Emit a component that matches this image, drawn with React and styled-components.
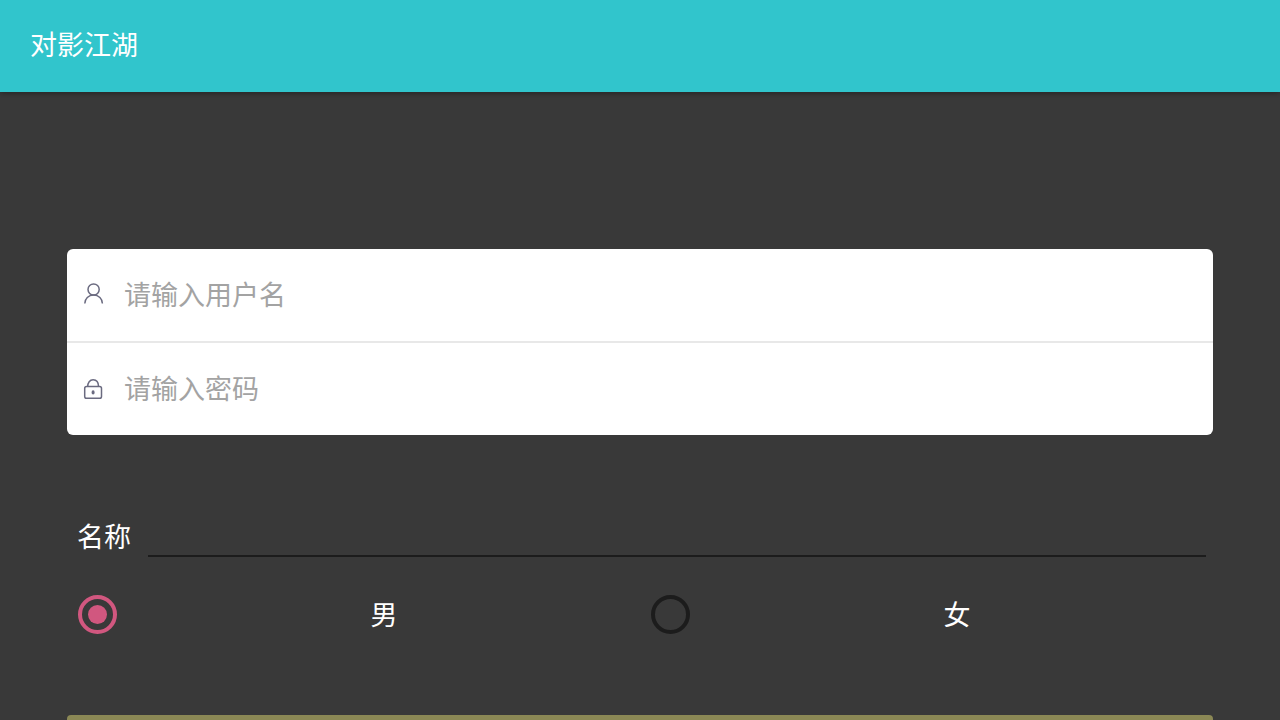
import React, { useState } from "react";
import styled, { createGlobalStyle } from "styled-components";

function App() {
  const [gender, setGender] = useState("male");

  return (
    <Screen>
      <GlobalStyle />
      <Header>
        <Title>对影江湖</Title>
      </Header>
      <Form onSubmit={(e) => e.preventDefault()}>
        <Card>
          <Field>
            <UserIcon />
            <FieldInput type="text" placeholder="请输入用户名" aria-label="用户名" />
          </Field>
          <Field>
            <LockIcon />
            <FieldInput type="password" placeholder="请输入密码" aria-label="密码" />
          </Field>
        </Card>

        <NameRow>
          <label htmlFor="name">名称</label>
          <NameInput id="name" type="text" />
        </NameRow>

        <GenderRow>
          <Option>
            <Radio
              name="gender"
              checked={gender === "male"}
              onChange={() => setGender("male")}
            />
            <span>男</span>
          </Option>
          <Option>
            <Radio
              name="gender"
              checked={gender === "female"}
              onChange={() => setGender("female")}
            />
            <span>女</span>
          </Option>
        </GenderRow>

        <Submit type="submit" aria-label="注册" />
      </Form>
    </Screen>
  );
}

export default App;

function UserIcon() {
  return (
    <Icon viewBox="0 0 24 24" aria-hidden="true">
      <circle cx="12.6" cy="6.5" r="5.6" />
      <path d="M3.8 20.6C3.8 15.6 7.5 12.1 12.6 12.1S21.4 15.6 21.4 20.6" />
    </Icon>
  );
}

function LockIcon() {
  return (
    <Icon viewBox="0 0 24 24" aria-hidden="true">
      <rect x="3.7" y="9.6" width="16.8" height="11.6" rx="1.8" />
      <path d="M6.7 9.6C6.7 5.5 8.8 2.8 12.1 2.8S17.5 5.5 17.5 9.6" />
      <ellipse cx="12.1" cy="15.4" rx="0.8" ry="1.3" fill="#6b6b80" />
    </Icon>
  );
}

const GlobalStyle = createGlobalStyle`
  * {
    box-sizing: border-box;
  }

  body {
    margin: 0;
    background: #393939;
  }

  body, input, button {
    font-family: "Noto Sans CJK SC", sans-serif;
    font-size: 27px;
  }
`;

const Screen = styled.div`
  display: flex;
  flex-direction: column;
  height: 100vh;
  color: #fff;
  background: #393939;
`;

const Header = styled.header`
  display: flex;
  flex-shrink: 0;
  align-items: center;
  height: 92px;
  padding: 0 30px 4px;
  background: #31c5cc;
  box-shadow: 0 1px 6px rgba(0, 0, 0, 0.4);
  z-index: 1;
`;

const Title = styled.h1`
  margin: 0;
  font-size: 27px;
  font-weight: 400;
  line-height: 40px;
`;

const Form = styled.form`
  flex: 1;
  min-height: 0;
  padding: 157px 67px 40px;
  overflow-y: auto;
  scrollbar-width: none;
`;

const Card = styled.div`
  background: #fff;
  border-radius: 6px;
`;

const Field = styled.label`
  display: flex;
  align-items: center;
  height: 92px;
  padding: 0 14px;

  & + & {
    height: 94px;
    border-top: 2px solid #e8e8e8;
  }
`;

const Icon = styled.svg`
  flex-shrink: 0;
  width: 24px;
  height: 24px;
  margin-right: 19px;
  fill: none;
  stroke: #6b6b80;
  stroke-width: 1.5;
`;

const FieldInput = styled.input`
  flex: 1;
  min-width: 0;
  height: 60px;
  padding: 0 0 4px;
  color: #333;
  background: none;
  border: 0;
  outline: none;

  &::placeholder {
    color: #a3a3a3;
  }
`;

const NameRow = styled.div`
  display: flex;
  align-items: center;
  margin-top: 78px;
  padding: 0 7px 0 10px;

  label {
    line-height: 46px;
  }
`;

const NameInput = styled.input`
  flex: 1;
  min-width: 0;
  height: 42px;
  margin-left: 17px;
  padding: 0;
  color: #fff;
  background: none;
  border: 0;
  border-bottom: 2px solid #1c1c1c;
  outline: none;
`;

const GenderRow = styled.div`
  display: flex;
  margin-top: 32px;
`;

const Option = styled.label`
  display: flex;
  flex: 1;
  align-items: center;
  height: 46px;
  padding-left: 11px;

  span {
    flex: 1;
    padding-bottom: 2px;
    margin-left: 11px;
    text-align: center;
  }
`;

const Radio = styled.input.attrs({ type: "radio" })`
  appearance: none;
  display: grid;
  place-items: center;
  width: 39px;
  height: 39px;
  margin: 0;
  border: 4px solid #1c1c1c;
  border-radius: 50%;

  &:checked {
    border-color: #d1577f;
  }

  &:checked::before {
    content: "";
    width: 19px;
    height: 19px;
    background: #d1577f;
    border-radius: 50%;
  }
`;

const Submit = styled.button`
  display: block;
  width: 100%;
  height: 80px;
  margin-top: 78px;
  color: #fff;
  background: #8b8855;
  border: 0;
  border-radius: 4px;
`;
